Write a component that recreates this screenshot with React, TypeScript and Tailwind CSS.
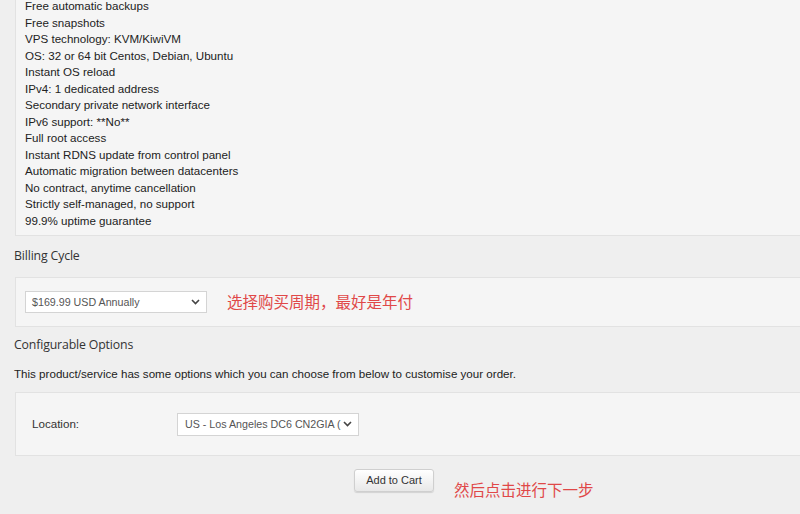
import React from "react";

const features = [
  "Free automatic backups",
  "Free snapshots",
  "VPS technology: KVM/KiwiVM",
  "OS: 32 or 64 bit Centos, Debian, Ubuntu",
  "Instant OS reload",
  "IPv4: 1 dedicated address",
  "Secondary private network interface",
  "IPv6 support: **No**",
  "Full root access",
  "Instant RDNS update from control panel",
  "Automatic migration between datacenters",
  "No contract, anytime cancellation",
  "Strictly self-managed, no support",
  "99.9% uptime guarantee",
];

function Chevron() {
  return (
    <svg width="9" height="6" viewBox="0 0 9 6" className="shrink-0">
      <polyline points="1,1 4.5,4.5 8,1" fill="none" stroke="#444" strokeWidth="1.6" />
    </svg>
  );
}

export default function App() {
  return (
    <div className="w-[800px] h-[514px] overflow-hidden bg-[#efefef] font-['Liberation_Sans',Arial,sans-serif] text-[#222]">
      {/* Features panel */}
      <div className="ml-[15px] h-[238px] bg-[#f5f5f5] border-b border-l border-[#e2e2e2] pl-[9px]">
        <ul className="-mt-[2px] text-[11.6px] leading-[16.5px]">
          {features.map((f) => (
            <li key={f}>{f}</li>
          ))}
        </ul>
      </div>

      {/* Billing cycle */}
      <div className="h-[41px] pl-[14px] flex items-center font-['Open_Sans',sans-serif] text-[12.3px] tracking-[-0.15px] text-[#333]">
        Billing Cycle
      </div>
      <div className="ml-[15px] h-[50px] bg-[#f5f5f5] border-y border-l border-[#e2e2e2] pl-[9px] flex items-center">
        <div className="w-[182px] h-[22px] bg-white border border-[#d4d4d4] flex items-center justify-between pl-[6px] pr-[6px] text-[10.7px] text-[#555]">
          <span>$169.99 USD Annually</span>
          <Chevron />
        </div>
        <span className="ml-[20px] text-[15.5px] text-[#e04848] font-['Noto_Sans_CJK_SC',sans-serif]">
          选择购买周期，最好是年付
        </span>
      </div>

      {/* Configurable options */}
      <div className="h-[36px] pl-[14px] flex items-center font-['Open_Sans',sans-serif] text-[12.3px] tracking-[-0.15px] text-[#333]">
        Configurable Options
      </div>
      <div className="h-[22px] pl-[14px] flex items-center text-[11.6px] text-[#222]">
        This product/service has some options which you can choose from below to customise your order.
      </div>
      <div className="h-[7px]" />
      <div className="ml-[15px] h-[64px] bg-[#f5f5f5] border-y border-l border-[#e2e2e2] flex items-center">
        <span className="ml-[16px] w-[145px] text-[11.6px] text-[#333]">Location:</span>
        <div className="w-[182px] h-[23px] bg-white border border-[#d4d4d4] flex items-center justify-between pl-[7px] pr-[6px] text-[10.7px] text-[#555]">
          <span className="whitespace-nowrap">US - Los Angeles DC6 CN2GIA (</span>
          <Chevron />
        </div>
      </div>

      {/* Add to cart */}
      <div className="flex items-start pt-[13px]">
        <button className="ml-[354px] w-[80px] h-[23px] rounded-[3px] border border-[#cfcfcf] bg-gradient-to-b from-white to-[#e8e8e8] shadow-[0_1px_1px_rgba(0,0,0,0.12)] text-[11px] text-[#333] flex items-center justify-center">
          Add to Cart
        </button>
        <span className="ml-[20px] mt-[10px] text-[15.5px] text-[#e04848] font-['Noto_Sans_CJK_SC',sans-serif] leading-[20px]">
          然后点击进行下一步
        </span>
      </div>
    </div>
  );
}
